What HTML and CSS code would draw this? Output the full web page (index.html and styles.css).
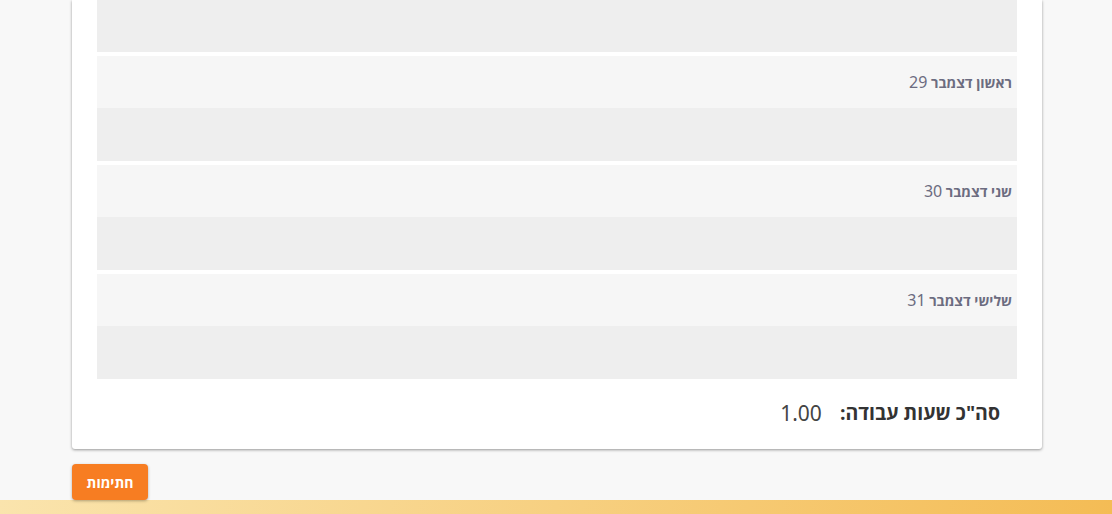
FILE: index.html
```html
<!DOCTYPE html>
<html lang="he" dir="rtl">
<head>
<meta charset="utf-8">
<title>שעות עבודה</title>
<link rel="stylesheet" href="styles.css">
</head>
<body>
<div class="page">
  <div class="card">
    <div class="days">
      <div class="hours-row"></div>
      <div class="day">
        <div class="day-head"><b>ראשון דצמבר</b> <span class="num">29</span></div>
        <div class="hours-row"></div>
      </div>
      <div class="day">
        <div class="day-head"><b>שני דצמבר</b> <span class="num">30</span></div>
        <div class="hours-row"></div>
      </div>
      <div class="day">
        <div class="day-head"><b>שלישי דצמבר</b> <span class="num">31</span></div>
        <div class="hours-row"></div>
      </div>
    </div>
    <div class="total">
      <span class="total-label">סה"כ שעות עבודה:</span>
      <span class="total-value">1.00</span>
    </div>
  </div>
  <div class="actions">
    <button class="btn">חתימות</button>
  </div>
</div>
<div class="footer-bar"></div>
</body>
</html>
```
FILE: styles.css
```css
html, body {
  margin: 0;
  padding: 0;
  background: #f8f8f8;
  font-family: "Open Sans", "DejaVu Sans", sans-serif;
}
.page {
  direction: ltr;
  padding: 0 70px 0 72px;
}
.card {
  direction: rtl;
  width: 970px;
  background: #fff;
  box-shadow: 0 1px 3px rgba(0,0,0,0.4);
  border-radius: 0 0 3px 3px;
  padding: 0 25px;
  box-sizing: border-box;
}
.days {
  display: flex;
  flex-direction: column;
  gap: 4px;
}
.hours-row {
  height: 52px;
  background: #eeeeee;
}
.day-head {
  height: 52px;
  background: #f6f6f6;
  color: #6c6c80;
  font-size: 14px;
  line-height: 52px;
  padding-right: 5px;
}
.day-head b {
  font-weight: 700;
}
.num {
  font-family: "Noto Sans", "Open Sans", sans-serif;
  font-size: 16px;
}
.day .hours-row {
  height: 53px;
}
.total {
  display: flex;
  gap: 18px;
  padding: 22px 17px 24px;
  line-height: 24px;
  font-size: 19.5px;
}
.total-label {
  font-weight: 700;
  color: #333;
}
.total-value {
  font-family: "Noto Sans", "Open Sans", sans-serif;
  font-size: 21px;
  color: #444;
}
.actions {
  padding-top: 15px;
  display: flex;
}
.btn {
  width: 76px;
  height: 36px;
  border: 0;
  border-radius: 4px;
  background: #f77d22;
  color: #fff;
  font-family: "Open Sans", "DejaVu Sans", sans-serif;
  font-weight: 700;
  font-size: 14px;
  box-shadow: 0 1px 3px rgba(0,0,0,0.3);
  padding: 0;
}
.footer-bar {
  height: 14px;
  background: linear-gradient(100deg, #fae4ad 0%, #f4bc55 100%);
}
```
